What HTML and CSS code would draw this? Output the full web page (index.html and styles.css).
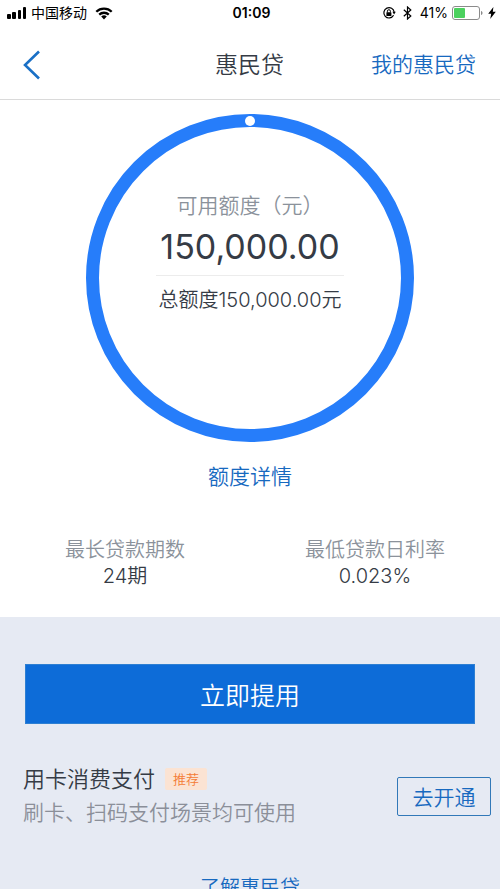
FILE: index.html
```html
<!DOCTYPE html>
<html lang="zh-CN">
<head>
<meta charset="utf-8">
<meta name="viewport" content="width=device-width, initial-scale=1">
<title>惠民贷</title>
<link rel="stylesheet" href="styles.css">
</head>
<body>
<div class="screen">
  <div class="status">
    <div class="status-side">
      <svg width="20" height="12" viewBox="0 0 20 12" aria-hidden="true"><rect x="0" y="7" width="4" height="5" rx="1"/><rect x="5" y="5" width="4" height="7" rx="1"/><rect x="11" y="3" width="3" height="9" rx="1"/><rect x="16" y="0" width="3" height="12" rx="1"/></svg>
      <span class="carrier">中国移动</span>
      <svg class="wifi" width="18" height="13" viewBox="0 0 18 13" aria-hidden="true"><path d="M1.3 4.8a11 11 0 0 1 15.4 0M4.2 7.7a6.9 6.9 0 0 1 9.6 0" fill="none" stroke="#000" stroke-width="2.3"/><path d="M6.2 9.6a4 4 0 0 1 5.6 0L9 12.6z"/></svg>
    </div>
    <time class="clock">01:09</time>
    <div class="status-side status-end">
      <svg width="14" height="14" viewBox="0 0 14 14" aria-hidden="true"><path d="M11.6 9.3a5.2 5.2 0 1 1 .6-3.1" fill="none" stroke="#000" stroke-width="1.2"/><path d="M10.4 5.8h3.4l-1.7 2.6z"/><rect x="4.4" y="6.2" width="5" height="3.8" rx=".5"/><path d="M5.4 6.5V5.2a1.5 1.5 0 0 1 3 0v1.3" fill="none" stroke="#000"/></svg>
      <svg class="bluetooth" width="9" height="14" viewBox="0 0 9 14" aria-hidden="true"><path d="M.8 3.8l7 6.2-3.3 3V1l3.3 3-7 6.2" fill="none" stroke="#000" stroke-width="1.2"/></svg>
      <span class="percent">41%</span>
      <svg width="31" height="14" viewBox="0 0 31 14" aria-hidden="true"><rect x=".5" y=".5" width="27" height="13" rx="2.5" fill="#fff" stroke="#8b8b8b"/><rect x="2" y="2" width="11" height="10" rx="1" fill="#4cd15f"/><path d="M29 5c2 .6 2 3.4 0 4z" fill="#8b8b8b"/></svg>
      <svg class="bolt" width="8" height="12" viewBox="0 0 8 12" aria-hidden="true"><path d="M5.4 0L.2 6.8h3L2.2 12l5.6-7.2h-3z"/></svg>
    </div>
  </div>
  <header class="nav">
    <button class="back" type="button" aria-label="返回"><svg width="18" height="30" viewBox="0 0 18 30" aria-hidden="true"><path d="M16 1.5L2 15l14 13.5" fill="none" stroke="#1a70c6" stroke-width="2.6"/></svg></button>
    <h1>惠民贷</h1>
    <a class="mine" href="#mine">我的惠民贷</a>
  </header>
  <main>
    <section class="summary">
      <div class="ring">
        <span class="dot"></span>
        <p class="ring-label">可用额度（元）</p>
        <p class="amount">150,000.00</p>
        <p class="total">总额度150,000.00元</p>
      </div>
      <a class="detail" href="#detail">额度详情</a>
      <dl class="facts">
        <div><dt>最长贷款期数</dt><dd>24期</dd></div>
        <div><dt>最低贷款日利率</dt><dd>0.023%</dd></div>
      </dl>
    </section>
    <section class="actions">
      <button class="primary" type="button">立即提用</button>
      <div class="offer">
        <div>
          <h2>用卡消费支付<span class="tag">推荐</span></h2>
          <p>刷卡、扫码支付场景均可使用</p>
        </div>
        <button class="open" type="button">去开通</button>
      </div>
      <a class="learn" href="#learn">了解惠民贷</a>
    </section>
  </main>
</div>
</body>
</html>
```
FILE: styles.css
```css
* { box-sizing: border-box; margin: 0; padding: 0; }
body {
  font-family: Inter, "Noto Sans CJK SC", sans-serif;
  font-weight: 350;
  color: #353b45;
  background: #fff;
}
a { color: #1769bf; text-decoration: none; }
button { font: inherit; border: 0; background: none; cursor: pointer; }
.screen { height: 100vh; overflow: hidden; display: flex; flex-direction: column; }
.status {
  display: grid;
  grid-template-columns: 1fr auto 1fr;
  align-items: center;
  flex: none;
  height: 26px;
  padding: 0 4px 0 7px;
  color: #000;
  font-weight: 400;
}
.status-side { display: flex; align-items: center; }
.status-end { justify-content: flex-end; }
.carrier { margin-left: 4px; font-size: 14px; line-height: 20px; }
.wifi { margin-left: 8px; }
.clock { font-size: 14px; font-weight: 600; line-height: 20px; }
.bluetooth { margin: 0 8px 0 7px; }
.percent { margin-right: 4px; font-size: 14px; line-height: 20px; }
.bolt { margin-left: 5px; }
.nav {
  display: grid;
  grid-template-columns: 1fr auto 1fr;
  align-items: center;
  flex: none;
  height: 74px;
  padding: 4px 24px 0 23px;
  border-bottom: 1px solid #dadada;
}
.back { justify-self: start; display: flex; }
.nav h1 { font-size: 23px; font-weight: 350; line-height: 32px; }
.mine { justify-self: end; font-size: 21px; line-height: 32px; }
main { flex: 1; display: flex; flex-direction: column; }
.summary { display: flex; flex-direction: column; align-items: center; padding: 14px 0 28px; }
.ring {
  position: relative;
  display: flex;
  flex-direction: column;
  align-items: center;
  width: 328px;
  height: 328px;
  padding-top: 64px;
  border: 13px solid #267dfa;
  border-radius: 50%;
}
.dot {
  position: absolute;
  top: -11px;
  left: calc(50% - 5px);
  width: 10px;
  height: 10px;
  border-radius: 50%;
  background: #fff;
}
.ring-label { font-size: 21px; line-height: 30px; color: #8b929b; }
.amount {
  padding: 4px 4px 6px;
  font-size: 34px;
  font-weight: 400;
  line-height: 44px;
  border-bottom: 1px solid #ececec;
}
.total { margin-top: 10px; font-size: 20px; line-height: 28px; }
.detail { margin-top: 20px; font-size: 21px; line-height: 30px; }
.facts { display: grid; grid-template-columns: 1fr 1fr; width: 100%; margin-top: 45px; text-align: center; }
.facts dt { font-size: 20px; line-height: 26px; color: #8b929b; }
.facts dd { font-size: 20px; line-height: 26px; }
.actions {
  flex: 1;
  display: flex;
  flex-direction: column;
  padding: 47px 25px 0;
  background: #e6eaf3;
}
.primary { height: 60px; flex: none; font-size: 25px; color: #fff; background: #0d6cd8; border: 1px solid #2d7fd2; }
.offer { display: flex; justify-content: space-between; align-items: center; margin: 38px -16px 0 -2px; }
.offer h2 { display: flex; align-items: center; font-size: 22px; font-weight: 350; line-height: 34px; }
.offer p { font-size: 21px; line-height: 34px; color: #8b8f99; }
.tag {
  margin-left: 10px;
  padding: 0 8px;
  font-size: 13px;
  line-height: 22px;
  color: #f47b35;
  background: #fbe3d3;
  border-radius: 2px;
}
.open { width: 94px; height: 39px; font-size: 21px; color: #1769bf; border: 1px solid #3178b8; border-radius: 2px; }
.learn { align-self: center; margin-top: 44px; font-size: 20px; line-height: 28px; }
```
